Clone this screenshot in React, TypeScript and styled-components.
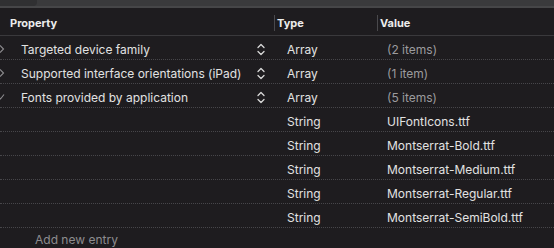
import React from "react";
import styled, { createGlobalStyle } from "styled-components";

const Global = createGlobalStyle`
  html, body { margin: 0; padding: 0; background: #1e1c1f; }
  body { font-family: Inter, "Noto Sans", sans-serif; -webkit-font-smoothing: antialiased; }
`;

const Frame = styled.div`
  width: 554px;
  height: 248px;
  overflow: hidden;
  background: #1e1c1f;
  display: flex;
  flex-direction: column;
`;

const TopBar = styled.div`
  height: 6px;
  flex: none;
  background: #3a3a3c;
  border-bottom: 2px solid #464648;
  position: relative;
`;

const TopTab = styled.div`
  position: absolute;
  left: 0;
  top: 0;
  width: 37px;
  height: 6px;
  background: #303032;
  border-bottom-right-radius: 4px;
`;

const Header = styled.div`
  height: 28px;
  flex: none;
  display: grid;
  grid-template-columns: 274px 103px 1fr;
  align-items: center;
  padding-top: 3px;
  box-sizing: border-box;
  border-bottom: 1px solid #3a393c;
`;

const HeadCell = styled.div<{ $sep?: boolean }>`
  font-size: 11px;
  font-weight: 700;
  color: #ececec;
  padding-left: ${(p) => (p.$sep ? "2px" : "10px")};
  height: 16px;
  line-height: 16px;
  border-left: ${(p) => (p.$sep ? "1px solid #4a494c" : "none")};
`;

const Row = styled.div`
  flex: none;
  display: grid;
  grid-template-columns: 274px 103px 1fr;
  align-items: center;
  padding-top: 3px;
  height: 20px;
  border-bottom: 1px dotted #47464a;
  font-size: 12px;
  color: #e2e2e2;
`;

const KeyCell = styled.div`
  display: flex;
  align-items: center;
  height: 100%;
  position: relative;
`;

const Disclosure = styled.svg`
  position: absolute;
  left: -3px;
  top: 50%;
  margin-top: -4px;
`;

const KeyText = styled.span`
  margin-left: 21px;
  flex: 1;
  white-space: nowrap;
`;

const Stepper = styled.svg`
  margin-right: 9px;
  flex: none;
`;

const TypeCell = styled.div`
  padding-left: 13px;
`;

const ValueCell = styled.div<{ $muted?: boolean }>`
  padding-left: 10px;
  color: ${(p) => (p.$muted ? "#9c9b9e" : "#e2e2e2")};
`;

const AddEntry = styled.div`
  padding-left: 35px;
  height: 24px;
  line-height: 23px;
  font-size: 12px;
  color: #8d8c8f;
`;

const Chevron = ({ open }: { open: boolean }) => (
  <Disclosure width="8" height="8" viewBox="0 0 8 8">
    {open ? (
      <polyline points="0.5,2.5 3.5,6 7,1.5" fill="none" stroke="#8e8d90" strokeWidth="1.1" />
    ) : (
      <polyline points="3,0.5 6.5,4 3,7.5" fill="none" stroke="#8e8d90" strokeWidth="1.1" />
    )}
  </Disclosure>
);

const StepIcon = () => (
  <Stepper width="8" height="13" viewBox="0 0 8 13">
    <polyline points="1,4.5 4,1.5 7,4.5" fill="none" stroke="#d8d8d8" strokeWidth="1.3" strokeLinecap="round" strokeLinejoin="round" />
    <polyline points="1,8.5 4,11.5 7,8.5" fill="none" stroke="#d8d8d8" strokeWidth="1.3" strokeLinecap="round" strokeLinejoin="round" />
  </Stepper>
);

const parents = [
  { key: "Targeted device family", value: "(2 items)", open: false },
  { key: "Supported interface orientations (iPad)", value: "(1 item)", open: false },
  { key: "Fonts provided by application", value: "(5 items)", open: true },
];

const fonts = [
  "UIFontIcons.ttf",
  "Montserrat-Bold.ttf",
  "Montserrat-Medium.ttf",
  "Montserrat-Regular.ttf",
  "Montserrat-SemiBold.ttf",
];

export default function App() {
  return (
    <Frame>
      <Global />
      <TopBar>
        <TopTab />
      </TopBar>
      <Header>
        <HeadCell>Property</HeadCell>
        <HeadCell $sep>Type</HeadCell>
        <HeadCell $sep>Value</HeadCell>
      </Header>
      {parents.map((p) => (
        <Row key={p.key}>
          <KeyCell>
            <Chevron open={p.open} />
            <KeyText>{p.key}</KeyText>
            <StepIcon />
          </KeyCell>
          <TypeCell>Array</TypeCell>
          <ValueCell $muted>{p.value}</ValueCell>
        </Row>
      ))}
      {fonts.map((f) => (
        <Row key={f}>
          <KeyCell />
          <TypeCell>String</TypeCell>
          <ValueCell>{f}</ValueCell>
        </Row>
      ))}
      <AddEntry>Add new entry</AddEntry>
    </Frame>
  );
}
